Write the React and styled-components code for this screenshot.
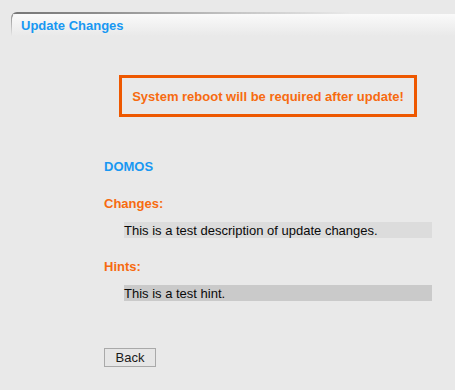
import React from "react";
import styled, { createGlobalStyle } from "styled-components";

const Global = createGlobalStyle`
  html, body { margin: 0; padding: 0; background: #e9e9e9; }
  body { font-family: "Liberation Sans", Arial, sans-serif; font-size: 13px; }
`;

const Page = styled.div`
  width: 455px;
  height: 390px;
  background: #e9e9e9;
  padding-top: 12px;
  box-sizing: border-box;
`;

const TabFrame = styled.div`
  margin-left: 11px;
  width: 444px;
  padding: 2px 0 0 1px;
  border-top-left-radius: 6px;
  background-color: transparent;
  background-image:
    linear-gradient(to right, #767676 0%, #8e8e8e 20%, #c4c4c4 50%, rgba(233,233,233,0) 76%),
    linear-gradient(to bottom, #8a8a8a 0%, #b0b0b0 45%, rgba(233,233,233,0) 100%);
  background-size: 100% 2px, 2px 100%;
  background-position: 0 0, 0 0;
  background-repeat: no-repeat;
`;

const Tab = styled.div`
  height: 22px;
  border-top-left-radius: 5px;
  background: linear-gradient(to bottom, #fafafa 0%, #f3f3f3 40%, #e9e9e9 100%);
  display: flex;
  align-items: center;
  padding-left: 9px;
`;

const Title = styled.span`
  color: #1898f2;
  font-weight: bold;
  font-size: 13px;
  margin-top: 1px;
`;

const Content = styled.div`
  margin-left: 104px;
  width: 328px;
  display: flex;
  flex-direction: column;
`;

const Warning = styled.div`
  margin-top: 39px;
  margin-left: 15px;
  width: 298px;
  height: 42px;
  box-sizing: border-box;
  border: 3px solid #ee5800;
  display: flex;
  align-items: center;
  justify-content: center;
  color: #f76b10;
  font-weight: bold;
  font-size: 13px;
`;

const Label = styled.div`
  color: ${(p) => (p.$blue ? "#1898f2" : "#f76b10")};
  font-weight: bold;
  font-size: 13px;
  line-height: 15px;
  margin-top: ${(p) => p.$top}px;
`;

const Value = styled.div`
  margin-left: 20px;
  margin-top: ${(p) => p.$top}px;
  height: 16px;
  line-height: 17px;
  background: ${(p) => p.$bg};
  color: #0a0a0a;
  font-size: 13px;
`;

const BackButton = styled.button`
  margin-top: 47px;
  width: 52px;
  height: 19px;
  padding: 0;
  border: 1px solid #a9a9a9;
  background: #e6e6e6;
  color: #1a1a1a;
  font-family: "Liberation Sans", Arial, sans-serif;
  font-size: 13px;
  line-height: 16px;
  text-align: center;
`;

export default function App() {
  return (
    <>
      <Global />
      <Page>
        <TabFrame>
          <Tab>
            <Title>Update Changes</Title>
          </Tab>
        </TabFrame>
        <Content>
          <Warning>System reboot will be required after update!</Warning>
          <Label $blue $top={42}>DOMOS</Label>
          <Label $top={22}>Changes:</Label>
          <Value $top={11} $bg="#dcdcdc">This is a test description of update changes.</Value>
          <Label $top={21}>Hints:</Label>
          <Value $top={11} $bg="#cacaca">This is a test hint.</Value>
          <div>
            <BackButton>Back</BackButton>
          </div>
        </Content>
      </Page>
    </>
  );
}
